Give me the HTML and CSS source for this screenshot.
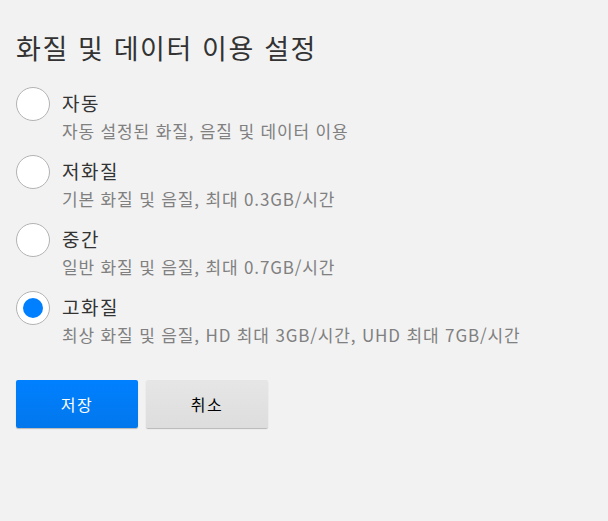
FILE: index.html
```html
<!DOCTYPE html>
<html lang="ko">
<head>
    <meta charset="UTF-8">
    <meta name="viewport" content="width=device-width, initial-scale=1.0">
    <title>화질 및 데이터 이용 설정</title>
    <link rel="stylesheet" href="styles.css">
</head>
<body>
    <div class="settings">
        <h1 class="title">화질 및 데이터 이용 설정</h1>
        <ul class="options">
            <li class="option">
                <span class="radio"></span>
                <div class="option-text">
                    <div class="option-label">자동</div>
                    <div class="option-desc">자동 설정된 화질, 음질 및 데이터 이용</div>
                </div>
            </li>
            <li class="option">
                <span class="radio"></span>
                <div class="option-text">
                    <div class="option-label">저화질</div>
                    <div class="option-desc">기본 화질 및 음질, 최대 0.3GB/시간</div>
                </div>
            </li>
            <li class="option">
                <span class="radio"></span>
                <div class="option-text">
                    <div class="option-label">중간</div>
                    <div class="option-desc">일반 화질 및 음질, 최대 0.7GB/시간</div>
                </div>
            </li>
            <li class="option">
                <span class="radio checked"></span>
                <div class="option-text">
                    <div class="option-label">고화질</div>
                    <div class="option-desc">최상 화질 및 음질, HD 최대 3GB/시간, UHD 최대 7GB/시간</div>
                </div>
            </li>
        </ul>
        <div class="actions">
            <button class="btn btn-save">저장</button>
            <button class="btn btn-cancel">취소</button>
        </div>
    </div>
</body>
</html>
```

FILE: styles.css
```css
body {
    margin: 0;
    background-color: #f2f2f2;
    color: #333;
    font-family: "Noto Sans CJK KR", "Noto Sans", sans-serif;
}
.settings {
    padding: 28px 16px;
}
.title {
    margin: 0 0 19px 0;
    font-size: 27px;
    font-weight: normal;
    letter-spacing: 1.6px;
    line-height: 40px;
}
.options {
    list-style: none;
    margin: 0;
    padding: 0;
}
.option {
    display: flex;
    align-items: flex-start;
    height: 68px;
}
.radio {
    width: 32px;
    height: 32px;
    border: 1px solid #b3b3b3;
    border-radius: 50%;
    background-color: white;
    display: flex;
    align-items: center;
    justify-content: center;
    flex-shrink: 0;
}
.radio.checked::after {
    content: "";
    width: 20px;
    height: 20px;
    border-radius: 50%;
    background-color: #0080ff;
}
.option-text {
    margin-left: 12px;
    padding-top: 2px;
}
.option-label {
    font-size: 19px;
    letter-spacing: 1.5px;
    line-height: 28px;
    color: #333;
}
.option-desc {
    font-size: 17px;
    letter-spacing: 0.85px;
    line-height: 28px;
    color: #808080;
}
.actions {
    display: flex;
    gap: 8px;
    margin-top: 21px;
}
.btn {
    width: 122px;
    height: 48px;
    border: none;
    border-radius: 2px;
    font-family: inherit;
    font-size: 16px;
    letter-spacing: 1.5px;
    box-shadow: 0 1px 1px rgba(0, 0, 0, 0.25);
    cursor: pointer;
}
.btn-save {
    background: linear-gradient(#0080ff, #0277ec);
    color: white;
}
.btn-cancel {
    background: linear-gradient(#e6e6e6, #dddddd);
    color: black;
}
```
